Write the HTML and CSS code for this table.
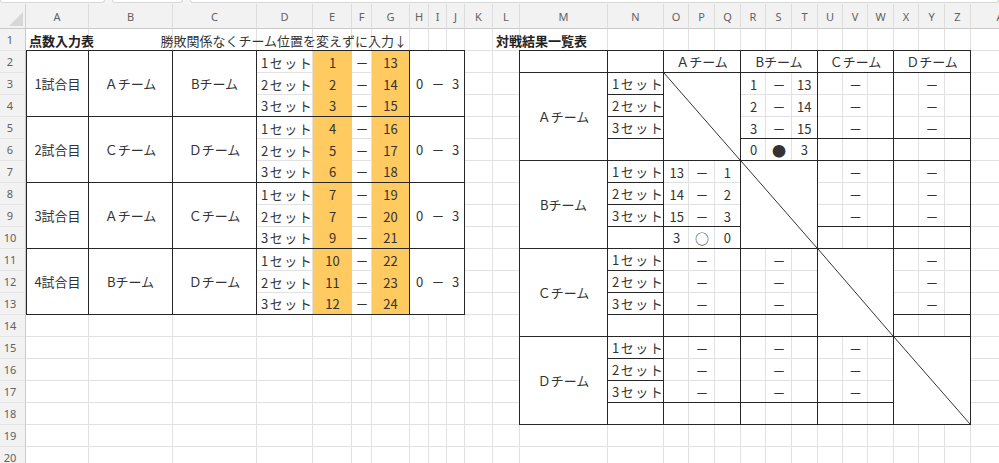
FILE: index.html
```html
<!DOCTYPE html>
<html lang="ja">
<head>
<meta charset="utf-8">
<title>点数入力表</title>
<link rel="stylesheet" href="styles.css">
</head>
<body>
<div class="topbar"><span class="tb tb1"></span><span class="tb tb2"></span><span class="tb tb3"></span></div>
<div class="sheet">
  <div class="corner"><span class="tri"></span></div>
  <div class="ch">A</div><div class="ch">B</div><div class="ch">C</div><div class="ch">D</div><div class="ch">E</div><div class="ch">F</div><div class="ch">G</div><div class="ch">H</div><div class="ch">I</div><div class="ch">J</div><div class="ch">K</div><div class="ch">L</div><div class="ch">M</div><div class="ch">N</div><div class="ch">O</div><div class="ch">P</div><div class="ch">Q</div><div class="ch">R</div><div class="ch">S</div><div class="ch">T</div><div class="ch">U</div><div class="ch">V</div><div class="ch">W</div><div class="ch">X</div><div class="ch">Y</div><div class="ch">Z</div><div class="ch">AA</div>

  <div class="rh">1</div><div class="rh">2</div><div class="rh">3</div><div class="rh">4</div><div class="rh">5</div><div class="rh">6</div><div class="rh">7</div><div class="rh">8</div><div class="rh">9</div><div class="rh">10</div><div class="rh">11</div><div class="rh">12</div><div class="rh">13</div><div class="rh">14</div><div class="rh">15</div><div class="rh">16</div><div class="rh">17</div><div class="rh">18</div><div class="rh">19</div><div class="rh">20</div>

  <div class="title t1">点数入力表</div>
  <div class="note">勝敗関係なくチーム位置を変えずに入力↓</div>
  <div class="title t3">対戦結果一覧表</div>

  <div class="lt">
    <div class="match">
      <div class="mc">1試合目</div><div class="mc">Ａチーム</div><div class="mc">Bチーム</div>
      <div class="set">1セット</div><div class="y">1</div><div class="dash">－</div><div class="y g">13</div>
      <div class="wc">0</div><div class="wc">－</div><div class="wc">3</div>
      <div class="set">2セット</div><div class="y">2</div><div class="dash">－</div><div class="y g">14</div>
      <div class="set">3セット</div><div class="y">3</div><div class="dash">－</div><div class="y g">15</div>
    </div>
    <div class="match">
      <div class="mc">2試合目</div><div class="mc">Ｃチーム</div><div class="mc">Ｄチーム</div>
      <div class="set">1セット</div><div class="y">4</div><div class="dash">－</div><div class="y g">16</div>
      <div class="wc">0</div><div class="wc">－</div><div class="wc">3</div>
      <div class="set">2セット</div><div class="y">5</div><div class="dash">－</div><div class="y g">17</div>
      <div class="set">3セット</div><div class="y">6</div><div class="dash">－</div><div class="y g">18</div>
    </div>
    <div class="match">
      <div class="mc">3試合目</div><div class="mc">Ａチーム</div><div class="mc">Ｃチーム</div>
      <div class="set">1セット</div><div class="y">7</div><div class="dash">－</div><div class="y g">19</div>
      <div class="wc">0</div><div class="wc">－</div><div class="wc">3</div>
      <div class="set">2セット</div><div class="y">7</div><div class="dash">－</div><div class="y g">20</div>
      <div class="set">3セット</div><div class="y">9</div><div class="dash">－</div><div class="y g">21</div>
    </div>
    <div class="match">
      <div class="mc">4試合目</div><div class="mc">Bチーム</div><div class="mc">Ｄチーム</div>
      <div class="set">1セット</div><div class="y">10</div><div class="dash">－</div><div class="y g">22</div>
      <div class="wc">0</div><div class="wc">－</div><div class="wc">3</div>
      <div class="set">2セット</div><div class="y">11</div><div class="dash">－</div><div class="y g">23</div>
      <div class="set">3セット</div><div class="y">12</div><div class="dash">－</div><div class="y g">24</div>
    </div>
  </div>

  <div class="rt">
    <div class="bx hd"></div><div class="bx hd"></div>
    <div class="bx hd">Ａチーム</div><div class="bx hd">Bチーム</div><div class="bx hd">Ｃチーム</div><div class="bx hd">Ｄチーム</div>

    <!-- A team -->
    <div class="bx lbl">Ａチーム</div>
    <div class="bx nset">1セット</div>
    <div class="bx diag"><svg class="dl" viewBox="0 0 100 100" preserveAspectRatio="none"><line x1="0" y1="0" x2="100" y2="100"/></svg></div>
    <div class="bx blk">
      <div class="c">1</div><div class="c">－</div><div class="c">13</div>
      <div class="c">2</div><div class="c">－</div><div class="c">14</div>
      <div class="c">3</div><div class="c">－</div><div class="c">15</div>
      <div class="tot"><div class="c">0</div><div class="c mark">●</div><div class="c">3</div></div>
    </div>
    <div class="bx blk"><div class="f">－</div><div class="f">－</div><div class="f">－</div><div class="tot"></div></div>
    <div class="bx blk"><div class="f">－</div><div class="f">－</div><div class="f">－</div><div class="tot"></div></div>
    <div class="bx nset">2セット</div>
    <div class="bx nset">3セット</div>
    <div class="bx nset"></div>

    <!-- B team -->
    <div class="bx lbl">Bチーム</div>
    <div class="bx nset">1セット</div>
    <div class="bx blk">
      <div class="c">13</div><div class="c">－</div><div class="c">1</div>
      <div class="c">14</div><div class="c">－</div><div class="c">2</div>
      <div class="c">15</div><div class="c">－</div><div class="c">3</div>
      <div class="tot"><div class="c">3</div><div class="c mark">○</div><div class="c">0</div></div>
    </div>
    <div class="bx diag"><svg class="dl" viewBox="0 0 100 100" preserveAspectRatio="none"><line x1="0" y1="0" x2="100" y2="100"/></svg></div>
    <div class="bx blk"><div class="f">－</div><div class="f">－</div><div class="f">－</div><div class="tot"></div></div>
    <div class="bx blk"><div class="f">－</div><div class="f">－</div><div class="f">－</div><div class="tot"></div></div>
    <div class="bx nset">2セット</div>
    <div class="bx nset">3セット</div>
    <div class="bx nset"></div>

    <!-- C team -->
    <div class="bx lbl">Ｃチーム</div>
    <div class="bx nset">1セット</div>
    <div class="bx blk"><div class="f">－</div><div class="f">－</div><div class="f">－</div><div class="tot"></div></div>
    <div class="bx blk"><div class="f">－</div><div class="f">－</div><div class="f">－</div><div class="tot"></div></div>
    <div class="bx diag"><svg class="dl" viewBox="0 0 100 100" preserveAspectRatio="none"><line x1="0" y1="0" x2="100" y2="100"/></svg></div>
    <div class="bx blk"><div class="f">－</div><div class="f">－</div><div class="f">－</div><div class="tot"></div></div>
    <div class="bx nset">2セット</div>
    <div class="bx nset">3セット</div>
    <div class="bx nset"></div>

    <!-- D team -->
    <div class="bx lbl">Ｄチーム</div>
    <div class="bx nset">1セット</div>
    <div class="bx blk"><div class="f">－</div><div class="f">－</div><div class="f">－</div><div class="tot"></div></div>
    <div class="bx blk"><div class="f">－</div><div class="f">－</div><div class="f">－</div><div class="tot"></div></div>
    <div class="bx blk"><div class="f">－</div><div class="f">－</div><div class="f">－</div><div class="tot"></div></div>
    <div class="bx diag"><svg class="dl" viewBox="0 0 100 100" preserveAspectRatio="none"><line x1="0" y1="0" x2="100" y2="100"/></svg></div>
    <div class="bx nset">2セット</div>
    <div class="bx nset">3セット</div>
    <div class="bx nset"></div>
  </div>
</div>
</body>
</html>
```

FILE: styles.css
```css
* { box-sizing: border-box; }
html, body { margin: 0; padding: 0; background: #fff; }
body {
  width: 999px;
  height: 463px;
  overflow: hidden;
  font-family: "Noto Sans CJK JP", "Noto Sans", sans-serif;
  font-size: 13px;
  color: #333;
}

/* remnant of the formula bar */
.topbar { height: 4px; display: flex; gap: 7px; background: #f4f4f4; }
.tb { height: 3px; background: #fff; border: 1px solid #d6d6d6; border-top: none; border-radius: 0 0 3px 3px; }
.tb1 { width: 105px; }
.tb2 { width: 71px; }
.tb3 { flex: 1; }

.sheet {
  display: grid;
  width: 1037px;
  grid-template-columns: 26px 63px 84px 84px 56px 39px 20px 38px 19px 18px 18px 28px 27px 88px 56px 25px 26px 26px 25px 26px 26px 25px 25px 26px 25px 26px 26px 66px;
  grid-template-rows: 25px repeat(20, 22px);
  background:
    linear-gradient(#e1e1e1, #e1e1e1) 88px 0 / 1px 100% no-repeat,
    linear-gradient(#e1e1e1, #e1e1e1) 172px 0 / 1px 100% no-repeat,
    linear-gradient(#e1e1e1, #e1e1e1) 256px 0 / 1px 100% no-repeat,
    linear-gradient(#e1e1e1, #e1e1e1) 312px 0 / 1px 100% no-repeat,
    linear-gradient(#e1e1e1, #e1e1e1) 351px 0 / 1px 100% no-repeat,
    linear-gradient(#e1e1e1, #e1e1e1) 371px 0 / 1px 100% no-repeat,
    linear-gradient(#e1e1e1, #e1e1e1) 409px 0 / 1px 100% no-repeat,
    linear-gradient(#e1e1e1, #e1e1e1) 428px 0 / 1px 100% no-repeat,
    linear-gradient(#e1e1e1, #e1e1e1) 446px 0 / 1px 100% no-repeat,
    linear-gradient(#e1e1e1, #e1e1e1) 464px 0 / 1px 100% no-repeat,
    linear-gradient(#e1e1e1, #e1e1e1) 492px 0 / 1px 100% no-repeat,
    linear-gradient(#e1e1e1, #e1e1e1) 519px 0 / 1px 100% no-repeat,
    linear-gradient(#e1e1e1, #e1e1e1) 607px 0 / 1px 100% no-repeat,
    linear-gradient(#e1e1e1, #e1e1e1) 663px 0 / 1px 100% no-repeat,
    linear-gradient(#e1e1e1, #e1e1e1) 688px 0 / 1px 100% no-repeat,
    linear-gradient(#e1e1e1, #e1e1e1) 714px 0 / 1px 100% no-repeat,
    linear-gradient(#e1e1e1, #e1e1e1) 740px 0 / 1px 100% no-repeat,
    linear-gradient(#e1e1e1, #e1e1e1) 765px 0 / 1px 100% no-repeat,
    linear-gradient(#e1e1e1, #e1e1e1) 791px 0 / 1px 100% no-repeat,
    linear-gradient(#e1e1e1, #e1e1e1) 817px 0 / 1px 100% no-repeat,
    linear-gradient(#e1e1e1, #e1e1e1) 842px 0 / 1px 100% no-repeat,
    linear-gradient(#e1e1e1, #e1e1e1) 867px 0 / 1px 100% no-repeat,
    linear-gradient(#e1e1e1, #e1e1e1) 893px 0 / 1px 100% no-repeat,
    linear-gradient(#e1e1e1, #e1e1e1) 918px 0 / 1px 100% no-repeat,
    linear-gradient(#e1e1e1, #e1e1e1) 944px 0 / 1px 100% no-repeat,
    linear-gradient(#e1e1e1, #e1e1e1) 970px 0 / 1px 100% no-repeat,
    linear-gradient(to bottom, transparent 21px, #e1e1e1 21px) 0 25px / 100% 22px repeat-y,
    #fff;
}

/* headers */
.corner {
  position: relative;
  background: #f2f2f2;
  border-right: 1px solid #cfcfcf;
  border-bottom: 1px solid #c9c9c9;
}
.tri {
  position: absolute;
  right: 2px;
  bottom: 2px;
  width: 0;
  height: 0;
  border-left: 14px solid transparent;
  border-bottom: 14px solid #d7d7d7;
}
.ch, .rh {
  display: flex;
  align-items: center;
  justify-content: center;
  background: #f2f2f2;
  font-family: "Noto Sans", "Open Sans", sans-serif;
  font-size: 11px;
  color: #616161;
}
.ch { border-right: 1px solid #dddddd; border-bottom: 1px solid #c9c9c9; }
.rh {
  grid-column: 1;
  padding-right: 5px;
  border-right: 1px solid #c9c9c9;
  border-bottom: 1px solid #e4e4e4;
}

/* titles */
.title {
  grid-row: 2;
  display: flex;
  align-items: center;
  padding-left: 3px;
  font-weight: 700;
  color: #222;
  white-space: nowrap;
}
.t1 { grid-column: 2 / 4; }
.t3 { grid-column: 13 / 16; }
.note {
  grid-row: 2;
  grid-column: 3 / 9;
  display: flex;
  align-items: center;
  justify-content: flex-end;
  padding-right: 3px;
  white-space: nowrap;
}

/* left table */
.lt {
  grid-column: 2 / 12;
  grid-row: 3 / 15;
  display: grid;
  grid-template-rows: repeat(4, 66px);
}
.match {
  display: grid;
  grid-template-columns: 62px 84px 84px 56px 39px 20px 38px 19px 18px 17px;
  grid-template-rows: 22px 22px 21px;
  border: 1px solid #262626;
  margin-top: -1px;
}
.match > div { display: flex; align-items: center; }
.mc {
  grid-row: span 3;
  justify-content: center;
  background: #fff;
  border-right: 1px solid #262626;
}
.set { padding-left: 4px; letter-spacing: 1.5px; white-space: nowrap; }
.y { justify-content: center; background: #ffca5f; }
.g { border-right: 1px solid #262626; }
.dash { justify-content: center; }
.wc { grid-row: span 3; justify-content: center; background: #fff; }

/* right table */
.rt {
  grid-column: 14 / 28;
  grid-row: 3 / 20;
  display: grid;
  grid-template-columns: 88px 56px 77px 77px 76px 77px;
  grid-template-rows: repeat(17, 22px);
}
.bx {
  border: 1px solid #262626;
  margin: -1px 0 0 -1px;
}
.hd, .lbl {
  display: flex;
  align-items: center;
  justify-content: center;
  background: #fff;
}
.lbl { grid-row: span 4; }
.nset {
  display: flex;
  align-items: center;
  padding-left: 4px;
  letter-spacing: 1.5px;
  white-space: nowrap;
}
.diag { grid-row: span 4; background: #fff; }
.dl { display: block; width: 100%; height: 100%; }
.dl line { stroke: #333; stroke-width: 1; vector-effect: non-scaling-stroke; }
.blk {
  grid-row: span 4;
  display: grid;
  grid-template-columns: repeat(3, 1fr);
  grid-template-rows: 22px 22px 22px 21px;
}
.c, .f { display: flex; align-items: center; justify-content: center; }
.f { grid-column: 1 / -1; }
.mark { font-size: 14px; }
.tot {
  grid-column: 1 / -1;
  display: grid;
  grid-template-columns: repeat(3, 1fr);
  border-top: 1px solid #262626;
  margin-top: -1px;
}
```
